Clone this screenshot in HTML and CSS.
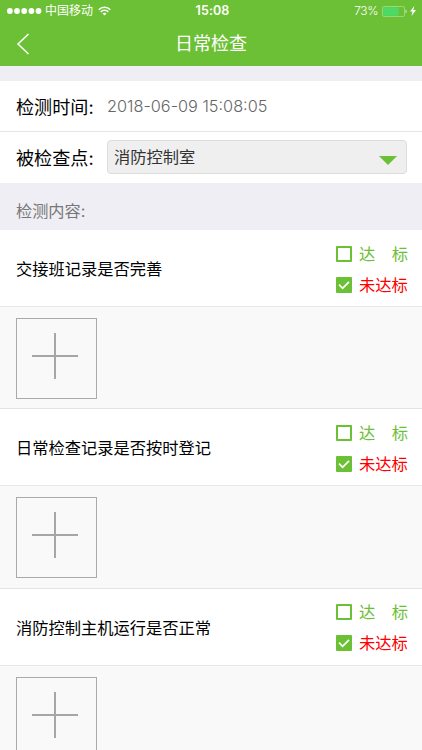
FILE: index.html
```html
<!DOCTYPE html>
<html lang="zh-CN">
<head>
<meta charset="utf-8">
<title>日常检查</title>
<link rel="stylesheet" href="styles.css">
</head>
<body>
<header class="header">
  <div class="status">
    <div class="carrier">
      <svg class="signal" width="35" height="6" viewBox="0 0 35 6" fill="#fff"><circle cx="2.9" cy="3" r="2.9"/><circle cx="10" cy="3" r="2.9"/><circle cx="17.2" cy="3" r="2.9"/><circle cx="24.4" cy="3" r="2.9"/><circle cx="31.5" cy="3" r="2.9"/></svg>
      <span class="operator">中国移动</span>
      <svg class="wifi" width="13" height="10" viewBox="0 0 13 10" fill="none" stroke="#fff" stroke-width="1.5"><path d="M.7 3.7a8.300 8.300 0 0 1 11.600 0M2.700 5.900a5.400 5.400 0 0 1 7.600 0"/><path d="M4.500 7.600a2.900 2.900 0 0 1 4 0l-2 2z" fill="#fff" stroke="none"/></svg>
    </div>
    <span class="clock">15:08</span>
    <div class="power">
      <span class="percent">73%</span>
      <svg class="battery" width="25" height="11" viewBox="0 0 25 11"><rect x=".5" y=".5" width="22" height="10" rx="1.6" fill="none" stroke="#a0d67b"/><rect x="1.2" y="1.2" width="15.4" height="8.6" rx=".8" fill="#4cd964"/><path d="M23.600 3.600c1.400.6 1.400 3.200 0 3.800z" fill="#dff2d3"/></svg>
      <svg class="bolt" width="6" height="10" viewBox="0 0 6 10"><path d="M4.300 0 0 5.600h2.500L1.500 10 6 4.100H3.300z" fill="#fff"/></svg>
    </div>
  </div>
  <div class="navbar">
    <svg class="back" width="14" height="22" viewBox="0 0 14 22" fill="none" stroke="#fff" stroke-width="1.5"><path d="M12.500 1 2 11l10.500 10"/></svg>
    <h1 class="title">日常检查</h1>
  </div>
</header>
<main>
  <section class="form">
    <div class="row row-time"><span class="label">检测时间:</span><span class="time">2018-06-09 15:08:05</span></div>
    <div class="row row-place"><span class="label">被检查点:</span>
      <div class="select"><span>消防控制室</span><svg width="18" height="9" viewBox="0 0 18 9"><path d="M0 0h18L9 9z" fill="#6cc035"/></svg></div>
    </div>
  </section>
  <h2 class="section-title">检测内容:</h2>
  <section class="item">
    <div class="question"><span class="name">交接班记录是否完善</span>
      <div class="options">
        <div class="option pass"><span class="box"></span><span class="text"><span>达</span><span>标</span></span></div>
        <div class="option fail"><span class="box checked"><svg width="16" height="16" viewBox="0 0 16 16" fill="none" stroke="#fff" stroke-width="1.7"><path d="m3 7.700 3.600 3.600 6.400-6.400"/></svg></span><span class="text">未达标</span></div>
      </div>
    </div>
    <div class="photos"><div class="add"><svg width="46" height="46" viewBox="0 0 46 46" stroke="#a6a6a6" stroke-width="2"><path d="M23 0v46M0 23h46"/></svg></div></div>
  </section>
  <section class="item">
    <div class="question"><span class="name">日常检查记录是否按时登记</span>
      <div class="options">
        <div class="option pass"><span class="box"></span><span class="text"><span>达</span><span>标</span></span></div>
        <div class="option fail"><span class="box checked"><svg width="16" height="16" viewBox="0 0 16 16" fill="none" stroke="#fff" stroke-width="1.7"><path d="m3 7.700 3.600 3.600 6.400-6.400"/></svg></span><span class="text">未达标</span></div>
      </div>
    </div>
    <div class="photos"><div class="add"><svg width="46" height="46" viewBox="0 0 46 46" stroke="#a6a6a6" stroke-width="2"><path d="M23 0v46M0 23h46"/></svg></div></div>
  </section>
  <section class="item">
    <div class="question"><span class="name">消防控制主机运行是否正常</span>
      <div class="options">
        <div class="option pass"><span class="box"></span><span class="text"><span>达</span><span>标</span></span></div>
        <div class="option fail"><span class="box checked"><svg width="16" height="16" viewBox="0 0 16 16" fill="none" stroke="#fff" stroke-width="1.7"><path d="m3 7.700 3.600 3.600 6.400-6.400"/></svg></span><span class="text">未达标</span></div>
      </div>
    </div>
    <div class="photos"><div class="add"><svg width="46" height="46" viewBox="0 0 46 46" stroke="#a6a6a6" stroke-width="2"><path d="M23 0v46M0 23h46"/></svg></div></div>
  </section>
</main>
</body>
</html>
```
FILE: styles.css
```css
* { box-sizing: border-box; }
body {
  margin: 0;
  height: 750px;
  overflow: hidden;
  background: #efeef4;
  color: #000;
  font-family: Inter, "Noto Sans CJK SC", sans-serif;
  font-size: 16.25px;
}
svg { display: block; flex: none; }
.header { height: 66px; background: #6cc035; color: #fff; }
.status {
  height: 22px;
  padding: 0 6px 0 7px;
  display: grid;
  grid-template-columns: 1fr auto 1fr;
  align-items: center;
  font-size: 12px;
  line-height: 22px;
}
.carrier, .power { display: flex; align-items: center; }
.operator { margin: 0 5px 0 3px; }
.clock { padding-left: 2px; font-size: 12.5px; font-weight: 600; letter-spacing: .1px; }
.power { justify-content: flex-end; }
.percent { font-weight: 300; letter-spacing: -.4px; }
.battery { margin-left: 4px; }
.bolt { margin-left: 3px; }
.navbar {
  height: 44px;
  padding: 0 16px;
  display: grid;
  grid-template-columns: 1fr auto 1fr;
  align-items: center;
}
.title { margin: 0; font-size: 18px; line-height: 42px; font-weight: 400; }
.form { margin-top: 15px; background: #fff; }
.row { height: 51px; padding: 0 15px 0 16px; display: flex; align-items: center; }
.row-time { border-bottom: 1px solid #e6e6e6; }
.row-place { padding-bottom: 1px; }
.label { width: 91px; flex: none; font-size: 18.1px; white-space: nowrap; }
.time { color: #666; font-size: 16.3px; font-weight: 300; }
.select {
  flex: 1;
  height: 34px;
  padding: 0 9px 2px 6px;
  display: flex;
  align-items: center;
  justify-content: space-between;
  background: #efefef;
  border: 1px solid #dcdcdc;
  border-radius: 4px;
  color: #333;
}
.select svg { margin-top: 9px; }
.section-title {
  margin: 0;
  height: 47px;
  padding: 9px 16px 0;
  font-size: 16.2px;
  font-weight: 400;
  line-height: 38px;
  color: #777;
}
.item { height: 179.3px; }
.question {
  height: 77px;
  padding: 0 14px 0 16px;
  display: flex;
  align-items: center;
  justify-content: space-between;
  background: #fff;
  border-bottom: 1px solid #e8e8e8;
}
.option { height: 31px; display: flex; align-items: center; gap: 7px; }
.box { width: 16px; height: 16px; margin-top: 2px; border: 2px solid #6cc035; border-radius: 1px; }
.checked { border: 0; background: #6cc035; }
.text { width: 49px; display: flex; justify-content: space-between; white-space: nowrap; }
.pass { color: #6cc035; }
.fail { color: #f00; }
.photos {
  height: 102.3px;
  padding: 11px 16px;
  background: #f9f9f9;
  border-bottom: 1px solid #e3e3e3;
}
.add {
  width: 81px;
  height: 81px;
  padding: 14px 15px;
  border: 1px solid #aaa;
}
```
